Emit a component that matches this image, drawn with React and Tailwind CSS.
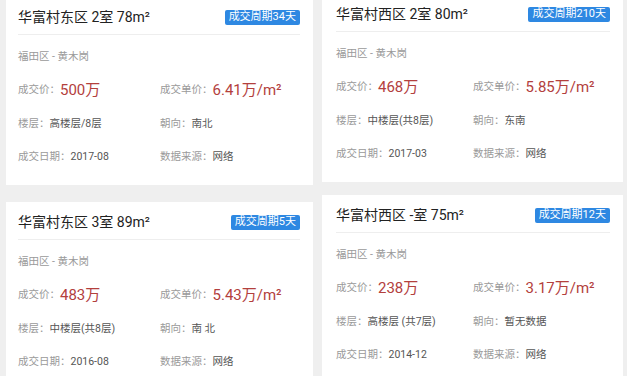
import React from "react";

const left = [
  {
    title: "华富村东区 2室 78m²",
    days: "成交周期34天",
    price: "500万",
    unit: "6.41万/m²",
    floor: "高楼层/8层",
    facing: "南北",
    date: "2017-08",
  },
  {
    title: "华富村东区 3室 89m²",
    days: "成交周期5天",
    price: "483万",
    unit: "5.43万/m²",
    floor: "中楼层(共8层)",
    facing: "南 北",
    date: "2016-08",
  },
];

const right = [
  {
    title: "华富村西区 2室 80m²",
    days: "成交周期210天",
    price: "468万",
    unit: "5.85万/m²",
    floor: "中楼层(共8层)",
    facing: "东南",
    date: "2017-03",
  },
  {
    title: "华富村西区 -室 75m²",
    days: "成交周期12天",
    price: "238万",
    unit: "3.17万/m²",
    floor: "高楼层 (共7层)",
    facing: "暂无数据",
    date: "2014-12",
  },
];

function Field({ label, children }) {
  return (
    <div className="flex items-center text-[10.5px]">
      <span className="text-[#9a9a9a]">{label}：</span>
      {children}
    </div>
  );
}

function Card({ item, wide }) {
  return (
    <div className={`bg-white pr-[13px] pt-[8px] pb-[12px] ${wide ? "pl-3" : "pl-[14px]"}`}>
      <div className="flex h-[24px] items-center justify-between">
        <span className="text-[14px] text-[#222]">{item.title}</span>
        <span className="flex h-[15px] items-center rounded-[2px] bg-[#2e88e2] px-[4px] text-[11px] text-white">
          {item.days}
        </span>
      </div>
      <div className="mt-[5px] border-t border-[#eeeeee]" />
      <div className="pt-[6px]">
        <div className="flex h-[32px] items-center text-[10.5px] text-[#9a9a9a]">福田区 - 黄木岗</div>
        <div className={`grid ${wide ? "grid-cols-[142px_1fr]" : "grid-cols-[137px_1fr]"}`}>
          <div className="h-[34px] flex items-center">
            <Field label="成交价">
              <span className="text-[15px] text-[#b3403d]">{item.price}</span>
            </Field>
          </div>
          <div className="h-[34px] flex items-center">
            <Field label="成交单价">
              <span className="text-[15px] text-[#b3403d]">{item.unit}</span>
            </Field>
          </div>
          <div className="h-[33px] flex items-center">
            <Field label="楼层">
              <span className="text-[#555]">{item.floor}</span>
            </Field>
          </div>
          <div className="h-[33px] flex items-center">
            <Field label="朝向">
              <span className="text-[#555]">{item.facing}</span>
            </Field>
          </div>
          <div className="h-[33px] flex items-center">
            <Field label="成交日期">
              <span className="text-[#555]">{item.date}</span>
            </Field>
          </div>
          <div className="h-[33px] flex items-center">
            <Field label="数据来源">
              <span className="text-[#555]">网络</span>
            </Field>
          </div>
        </div>
      </div>
    </div>
  );
}

export default function App() {
  return (
    <div
      className="flex h-[376px] w-[627px] gap-[9px] overflow-hidden bg-[#efefef] pl-[6px]"
      style={{ fontFamily: 'Roboto, "Noto Sans CJK SC", sans-serif' }}
    >
      <div className="mt-[-3px] flex w-[307px] flex-col gap-[17px]">
        {left.map((it) => (
          <Card key={it.title} item={it} wide />
        ))}
      </div>
      <div className="mt-[-6px] flex w-[301px] flex-col gap-[13px]">
        {right.map((it) => (
          <Card key={it.title} item={it} />
        ))}
      </div>
    </div>
  );
}
